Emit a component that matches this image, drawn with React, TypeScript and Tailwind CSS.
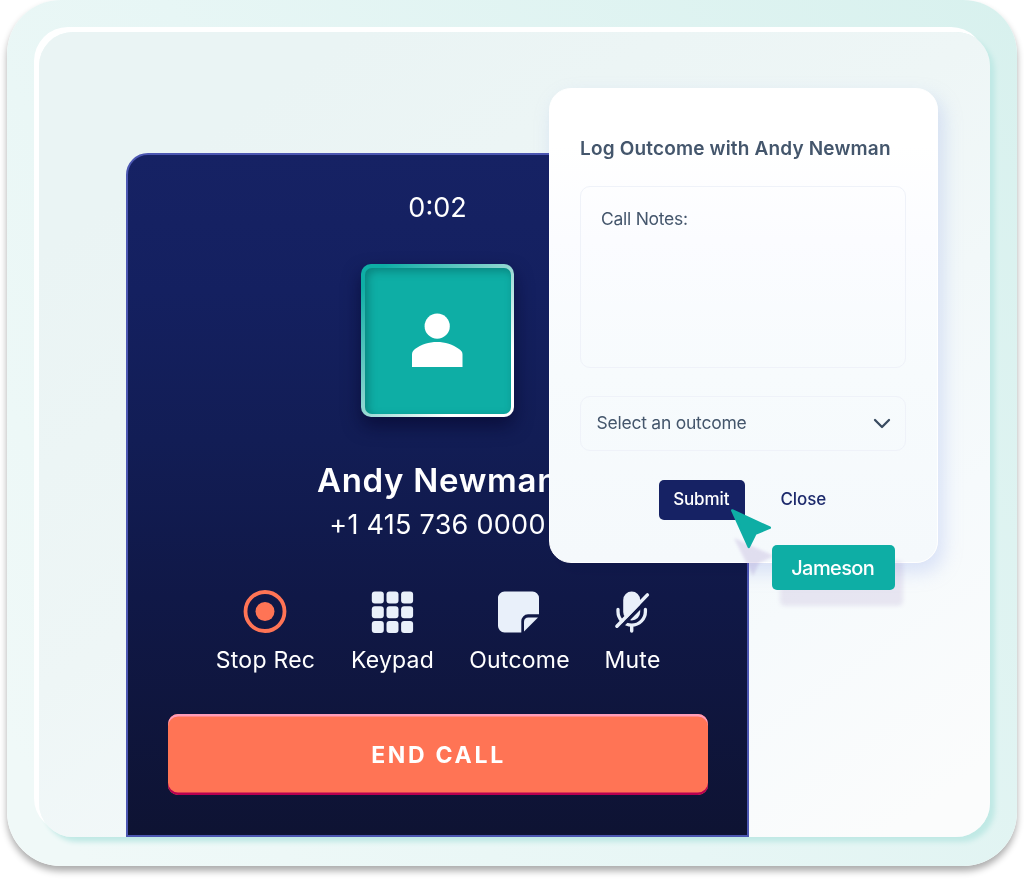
import type { ReactNode } from 'react';

function Action({ label, width, children }: { label: string; width: string; children: ReactNode }) {
  return (
    <button className={`flex flex-col items-center ${width}`}>
      <svg width="44" height="44" viewBox="0 0 44 44" fill="none">
        {children}
      </svg>
      <span className="mt-[12px] whitespace-nowrap pl-px text-[23px] leading-[28px] tracking-[0.25px]">{label}</span>
    </button>
  );
}

function Avatar() {
  return (
    <div className="mt-[40px] h-[153px] w-[153px] rounded-[10px] bg-[linear-gradient(135deg,#0eaea5_8%,#8fd6d0_48%,#ffffff_78%)] p-[3.5px] shadow-[0_9px_18px_0px_rgba(7,9,48,0.7)]">
      <div className="flex h-full w-full items-center justify-center rounded-[7px] bg-[#0eaea5] pb-px pr-[1px] shadow-[inset_3px_3px_9px_rgba(0,70,70,0.4)]">
        <svg width="52" height="54" viewBox="0 0 52 54" fill="white">
          <circle cx="26.2" cy="13.2" r="12.6" />
          <path d="M1 54V41.500C1 39 2 37.500 4 36C10 31.500 18 29 26 29S42 31.500 48 36C50.500 37.500 51.500 39 51.500 41.500V54Z" />
        </svg>
      </div>
    </div>
  );
}

const keys = [1.3, 16, 30.6];

function Phone() {
  return (
    <section className="ml-[87px] mt-[121px] flex h-[684px] w-[623px] flex-col items-center rounded-t-[22px] border-2 border-[#4c57b2] bg-[linear-gradient(180deg,#162264_0%,#142060_20%,#121d55_42%,#101847_65%,#0e1333_100%)] pt-[37px] text-white">
      <div className="text-[27px] leading-[32px]">0:02</div>
      <Avatar />
      <h1 className="mt-[42.500px] text-[33px] font-semibold leading-[40px] tracking-[0.7px]">Andy Newman</h1>
      <p className="mt-[9px] text-[27px] leading-[32px] tracking-[0.27px]">+1 415 736 0000</p>
      <div className="mt-[49.500px] flex gap-[35px]">
        <Action label="Stop Rec" width="w-[100px]">
          <circle cx="22" cy="21.500" r="19.500" stroke="#ff7455" strokeWidth="3.800" />
          <circle cx="22" cy="21.500" r="9.500" fill="#ff7455" />
        </Action>
        <Action label="Keypad" width="w-[84px]">
          {keys.map((y) =>
            keys.map((x) => <rect key={`${x}-${y}`} x={x + 0.5} y={y + 0.3} width="12" height="12" rx="3" fill="#e9f0fa" />),
          )}
        </Action>
        <Action label="Outcome" width="w-[100px]">
          <path fill="#e9f0fa" d="M7.500 1.500H35.500A6.500 6.500 0 0 1 42 8V24.300H31A7 7 0 0 0 24.300 31.500V42.500H7.500A6.500 6.500 0 0 1 1 36V8A6.500 6.500 0 0 1 7.500 1.500Z" />
          <path fill="#e9f0fa" d="M27 41.500V32Q27 27.500 31.500 27.500H41Z" />
        </Action>
        <Action label="Mute" width="w-[56px]">
          <rect x="13.200" y="1.500" width="17" height="29" rx="8.500" fill="#e9f0fa" />
          <path d="M8 19.500V21.500A13.700 13.700 0 0 0 35.400 21.500V19.500" stroke="#e9f0fa" strokeWidth="3.300" strokeLinecap="round" />
          <path d="M21.700 36V41" stroke="#e9f0fa" strokeWidth="3.400" strokeLinecap="round" />
          <path d="M9.100 38.800L40.200 7" stroke="#101847" strokeWidth="3.600" />
          <path d="M6.900 36.200L37.400 4.900" stroke="#e9f0fa" strokeWidth="3.500" strokeLinecap="round" />
        </Action>
      </div>
      <button className="mt-[39.5px] flex h-[81.5px] w-[540px] shrink-0 items-center justify-center rounded-[10px] bg-[#ff7455] pl-[2px] pt-[1px] text-[23px] font-bold tracking-[2.7px] shadow-[inset_0_2.5px_0_#ff9cb8,inset_0_-2.5px_0_#b80050]">
        END CALL
      </button>
    </section>
  );
}

function OutcomeDialog() {
  return (
    <>
      <div className="absolute left-[510px] top-[56px] h-[474.5px] w-[388.5px] rounded-[22px] mix-blend-multiply shadow-[5px_9px_18px_1px_rgba(170,185,240,0.34)]" />
      <section className="absolute left-[510px] top-[56px] h-[474.5px] w-[388.5px] rounded-[22px] border border-white bg-[linear-gradient(180deg,#ffffff_0%,#ffffff_12%,#fbfcff_32%,#f7fbfd_60%,#f5f9fc_100%)] px-[30px] pt-[48px] text-[#44566c]">
        <h2 className="whitespace-nowrap text-[19px] font-semibold leading-[24px] tracking-[0.17px]">Log Outcome with Andy Newman</h2>
        <div className="mt-[25px] h-[182px] w-[325.5px] rounded-[10px] border border-[#eff2f9] px-[20px] pt-[19.500px] text-[17.500px] leading-[24px] tracking-[-0.27px]">
          Call Notes:
        </div>
        <div className="mt-[28px] flex h-[55px] w-[325.5px] items-center justify-between rounded-[10px] border border-[#eff2f9] pl-[15.500px] pr-[14px] text-[17.500px] tracking-[-0.24px]">
          <span>Select an outcome</span>
          <svg width="18" height="12" viewBox="0 0 18 12" fill="none" stroke="#394b61" strokeWidth="2.300" strokeLinecap="round" strokeLinejoin="round">
            <path d="M2 2L9 9L16 2" />
          </svg>
        </div>
        <div className="ml-[78.500px] mt-[28.500px] flex items-center text-[17px] font-medium">
          <button className="h-[40px] w-[86.500px] rounded-[5px] bg-[#162264] pr-px pt-px tracking-[-0.12px] text-white">Submit</button>
          <button className="ml-[35.500px] h-[40px] pt-px tracking-[-0.1px] text-[#1d2a6c]">Close</button>
        </div>
      </section>
    </>
  );
}

function Collaborator() {
  return (
    <div className="absolute left-[689.500px] top-[474.500px] h-[110px] w-[180px]">
      <svg className="absolute left-0 top-0 overflow-visible" width="48" height="76" viewBox="0 0 48 76">
        <path className="blur-[1.5px]" d="M5 31L45 49L30 56L24 69Z" fill="#7b5ab4" fillOpacity=".17" />
        <path d="M3.300 3.500L40.800 20.700L26.500 26.500L19.800 40Z" fill="#0eaea5" stroke="#0eaea5" strokeWidth="2.500" strokeLinejoin="round" />
      </svg>
      <div className="absolute left-[43px] top-[38.500px] flex h-[45px] w-[123.500px] items-center justify-center rounded-[5px] bg-[#0eaea5] pr-[1px] text-[20px] font-medium tracking-[-0.6px] text-white shadow-[8px_16px_4px_rgba(120,90,170,0.13)]">
        Jameson
      </div>
    </div>
  );
}

export default function App() {
  return (
    <main className="h-[880px] w-[1024px] overflow-hidden bg-white pl-[7px] font-['Inter',sans-serif]">
      <div className="h-[866px] w-[1010px] rounded-[54px] bg-[linear-gradient(58deg,#f0f9f8_5%,#e7f6f5_45%,#d8f1ee_100%)] pl-[32px] pt-[32px] shadow-[0_5px_7px_rgba(0,0,0,0.33)]">
        <div className="relative flow-root h-[805px] w-[951px] rounded-[34px] bg-[linear-gradient(145deg,#eaf4f4_15%,#eef6f6_45%,#f6fafc_75%,#fbfcfc_95%)] shadow-[-5px_-5px_0_#ffffff,5px_5px_5px_#c0e9e5]">
          <Phone />
          <OutcomeDialog />
          <Collaborator />
        </div>
      </div>
    </main>
  );
}
